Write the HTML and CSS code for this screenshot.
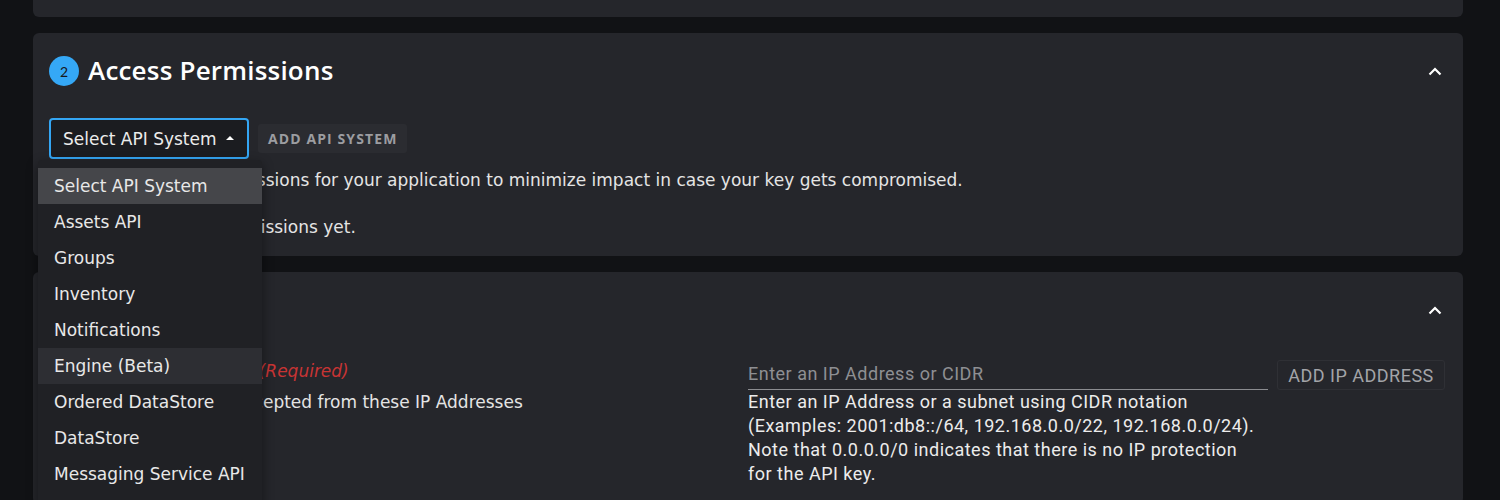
FILE: index.html
```html
<!DOCTYPE html>
<html>
<head>
<meta charset="utf-8">
<link rel="stylesheet" href="styles.css">
</head>
<body>
<div class="page">
  <section class="card card-top"></section>

  <section class="card">
    <header class="card-head">
      <div class="title-wrap">
        <span class="badge">2</span>
        <h2 class="title">Access Permissions</h2>
      </div>
      <svg class="chev" width="14" height="9" viewBox="0 0 14 9"><path d="M1.5 7.5 L7 2 L12.5 7.5" fill="none" stroke="#fff" stroke-width="2.2"/></svg>
    </header>
    <div class="perm-row">
      <div class="select-wrap">
        <div class="select">
          <span>Select API System</span>
          <span class="caret"></span>
        </div>
        <ul class="menu">
          <li class="item selected">Select API System</li>
          <li class="item">Assets API</li>
          <li class="item">Groups</li>
          <li class="item">Inventory</li>
          <li class="item">Notifications</li>
          <li class="item hover">Engine (Beta)</li>
          <li class="item">Ordered DataStore</li>
          <li class="item">DataStore</li>
          <li class="item">Messaging Service API</li>
          <li class="item">User Restrictions</li>
        </ul>
      </div>
      <button class="btn-add">ADD API SYSTEM</button>
    </div>
    <p class="desc">Pick the minimum permissions for your application to minimize impact in case your key gets compromised.</p>
    <p class="desc empty">You don't have any permissions yet.</p>
  </section>

  <section class="card">
    <header class="card-head">
      <div class="title-wrap">
        <span class="badge">3</span>
        <h2 class="title">Security</h2>
      </div>
      <svg class="chev" width="14" height="9" viewBox="0 0 14 9"><path d="M1.5 7.5 L7 2 L12.5 7.5" fill="none" stroke="#fff" stroke-width="2.2"/></svg>
    </header>
    <div class="sec-grid">
      <div class="sec-left">
        <div class="label">Accepted IP Addresses <em class="req">(Required)</em></div>
        <div class="sub">Requests will only be accepted from these IP Addresses</div>
      </div>
      <div class="sec-right">
        <div class="ip-row">
          <div class="ip-input">Enter an IP Address or CIDR</div>
          <button class="btn-ip">ADD IP ADDRESS</button>
        </div>
        <p class="help">Enter an IP Address or a subnet using CIDR notation<br>(Examples: 2001:db8::/64, 192.168.0.0/22, 192.168.0.0/24).<br>Note that 0.0.0.0/0 indicates that there is no IP protection<br>for the API key.</p>
      </div>
    </div>
  </section>
</div>
</body>
</html>
```

FILE: styles.css
```css
* { box-sizing: border-box; }
html, body {
  margin: 0;
  height: 100%;
  overflow: hidden;
  background: #111215;
}
body {
  font-family: "DejaVu Sans", "Open Sans", sans-serif;
  color: #e8e8e8;
}
.page {
  width: 1430px;
  margin-left: 33px;
  display: flex;
  flex-direction: column;
  gap: 16px;
}
.card {
  background: #25262b;
  border-radius: 6px;
  padding: 0 16px 18px 16px;
}
.card-top {
  height: 17px;
  border-radius: 0 0 6px 6px;
  padding: 0;
}
.card-head {
  height: 76px;
  display: flex;
  align-items: center;
  justify-content: space-between;
}
.title-wrap {
  display: flex;
  align-items: center;
  gap: 9px;
}
.badge {
  width: 30px;
  height: 30px;
  border-radius: 50%;
  background: #35a8f6;
  color: #16171a;
  font-size: 14px;
  display: flex;
  align-items: center;
  justify-content: center;
  font-family: "Lato", sans-serif;
}
.title {
  margin: 0;
  font-family: "Open Sans", sans-serif;
  font-size: 26px;
  font-weight: 600;
  color: #fff;
  margin-top: -2px;
  letter-spacing: 0.2px;
}
.chev { margin-right: 5px; }

.perm-row {
  display: flex;
  align-items: center;
  gap: 9px;
  margin-top: 9px;
}
.select-wrap { position: relative; }
.select {
  width: 200px;
  height: 41px;
  border: 2px solid #34a6f4;
  border-radius: 4px;
  background: #1b1c20;
  display: flex;
  align-items: center;
  padding-left: 12px;
  gap: 9px;
  font-size: 17px;
  color: #ececec;
}
.caret {
  width: 0; height: 0;
  border-left: 4px solid transparent;
  border-right: 4px solid transparent;
  border-bottom: 4px solid #fff;
  margin-top: -2px;
}
.menu {
  position: absolute;
  left: -11px;
  top: 42px;
  width: 224px;
  margin: 0;
  padding: 8px 0 0 0;
  list-style: none;
  background: #202125;
  border-radius: 4px;
  box-shadow: 0 4px 12px rgba(0,0,0,0.45);
  z-index: 10;
}
.item {
  height: 36px;
  line-height: 36px;
  padding-left: 16px;
  font-size: 17px;
  color: #e8e8e8;
  white-space: nowrap;
}
.item.selected { background: #45464a; }
.item.hover { background: #2d2e33; }
.btn-add {
  height: 29px;
  padding: 0 10px;
  border: none;
  border-radius: 3px;
  background: #2b2c31;
  color: #9c9da1;
  font-family: "Open Sans", sans-serif;
  font-weight: 700;
  font-size: 14px;
  letter-spacing: 1.1px;
}
.desc {
  margin: 10px 0 0 0;
  font-size: 17px;
  line-height: 22px;
  color: #e4e4e4;
}
.desc.empty { margin-top: 25px; }

.sec-grid {
  display: grid;
  grid-template-columns: 699px 1fr;
  margin-top: 9px;
}
.label {
  font-size: 17px;
  line-height: 22px;
  color: #e4e4e4;
  margin-top: 3px;
}
.req {
  color: #c83434;
  margin-left: 12px;
}
.sub {
  margin-top: 9px;
  font-size: 17px;
  line-height: 22px;
  color: #e4e4e4;
  white-space: nowrap;
}
.sec-right {
  font-family: "Roboto", sans-serif;
  padding-top: 3px;
}
.ip-row {
  display: flex;
  align-items: flex-start;
  gap: 9px;
}
.ip-input {
  width: 520px;
  height: 31px;
  border-bottom: 1px solid #8b8c90;
  font-size: 18px;
  letter-spacing: 0.5px;
  color: #8e8f93;
  line-height: 30px;
  margin-top: -1px;
}
.btn-ip {
  height: 30px;
  width: 168px;
  padding: 0;
  border: 1px solid #2f3035;
  border-radius: 3px;
  background: transparent;
  color: #a3a4a8;
  font-family: "Roboto", sans-serif;
  font-size: 18px;
  letter-spacing: 0.5px;
}
.help {
  margin: 0;
  font-size: 18px;
  letter-spacing: 0.5px;
  line-height: 24px;
  color: #ececec;
}
```
